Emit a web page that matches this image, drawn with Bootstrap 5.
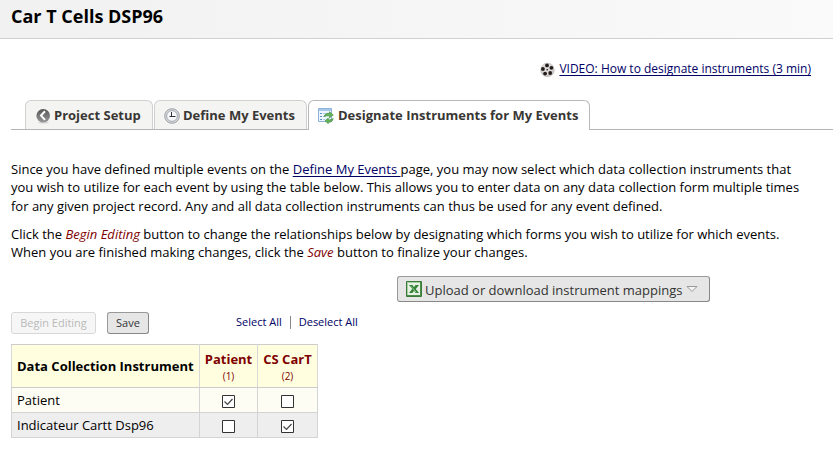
<!DOCTYPE html>
<html lang="en">
<head>
<meta charset="utf-8">
<title>Car T Cells DSP96</title>
<link href="https://cdn.jsdelivr.net/npm/bootstrap@5.3.0/dist/css/bootstrap.min.css" rel="stylesheet">
<style>
body{font-family:"Open Sans",sans-serif;font-size:13px;line-height:18.57px;color:#000;background:#fff;overflow:hidden}
a{color:#000066}
svg{flex:none;display:block}
.page-head{height:39px;padding:4px 11px 0;background:linear-gradient(90deg,#f1f1f1,#fafafa);border-bottom:1px solid #d0d0d0}
.page-head h1{font-size:18px;font-weight:700;line-height:25px}
.video-row{height:61px;padding:21px 22px 0 0}
.video-row a{font-size:12px;line-height:18px;text-decoration:none}
.video-row svg{margin:2px 4px 0 0}
.video-row a span,.ul{text-decoration:underline;text-decoration-thickness:1px;text-underline-offset:2px;text-decoration-skip-ink:none}
.page-main{padding-left:11px}
.nav-tabs.steps{height:30px;padding-left:14px;gap:1px;border-bottom:1px solid #b5b5b5}
.steps .nav-link{height:29px;margin:0;padding:0 10px;border:1px solid #d0d0d0;border-bottom:0;border-radius:6px 6px 0 0;background:#f4f4f3;color:#393733;font-size:13px;font-weight:700;white-space:nowrap}
.steps .nav-link svg{margin:1px 3px 0 0}
.steps .nav-link.t2 svg{margin-left:-1px}
.steps .nav-link.t3 svg{margin-right:4px}
.steps .nav-link.active{height:30px;padding:0 9px 1px;background:#fff;border-color:#b8b8b8;color:#393733}
.t1{width:128px}.t2{width:153px}.t3{width:282px}
.intro{padding-top:30px}
.intro p{margin-bottom:9.8px;line-height:18.4px;white-space:nowrap}
.intro em,.ev{color:#800000}
.tool{border:1px solid #999;border-right-color:#888;border-bottom-color:#888;border-radius:3px;background:#e6e6e6;color:#333;padding:0;line-height:1}
.tool:disabled{background:#f6f6f6;border-color:#d8d8d8;color:#b9b9b9;opacity:1}
.map-btn{width:313px;height:26px;margin:14.2px 0 10px 386px;font-size:13px;padding-left:8px}
.map-btn span{padding-top:3px;margin-left:3px}
.small-btn{height:22px;font-size:11px;padding-bottom:2px}
.w-edit{width:85px}.w-save{width:42px;margin-left:11px}
.picks{font-size:11px;margin-left:87px;line-height:20px;padding-bottom:2px}
.picks a{text-decoration:none}
.sep{width:1px;height:13px;background:#888;margin:0 8px}
.grid-table{width:307px;table-layout:fixed;border-collapse:collapse;margin:10px 0 0;border:1px solid #c8c8c8}
.grid-table th,.grid-table td{border:1px solid #d4d4d4;padding:0 5px;height:25px;line-height:18px;vertical-align:middle;white-space:nowrap}
.grid-table th{height:43px;background:#ffffe0;border-color:#ccc #d8d8d8;padding-bottom:1px}
.grid-table th.ev{padding:2px 0 0;line-height:17px}
.grid-table .ev small{display:block;font-size:10px;font-weight:400;line-height:16px}
.grid-table tbody tr:first-child{background:#fdfdf4}
.grid-table tbody tr:last-child{background:#eee}
.grid-table td svg{margin:3px auto 0}
</style>
<script src="https://cdn.jsdelivr.net/npm/bootstrap@5.3.0/dist/js/bootstrap.bundle.min.js"></script>
</head>
<body>
<header class="page-head"><h1 class="m-0">Car T Cells DSP96</h1></header>
<div class="video-row d-flex justify-content-end">
<a href="#" class="d-flex align-items-center align-self-start">
<svg width="15" height="16" viewBox="0 0 15 16"><circle cx="7.5" cy="8" r="7.2" fill="#c9c6c4"/><circle cx="7" cy="7" r="5.6" fill="#dddbd9"/><g fill="#231c1b"><circle cx="7" cy="3.4" r="1.9"/><circle cx="11.4" cy="5.8" r="1.9"/><circle cx="10.2" cy="11" r="1.9"/><circle cx="5.1" cy="11.6" r="1.9"/><circle cx="2.9" cy="7" r="1.9"/><circle cx="7.2" cy="7.8" r=".8"/></g></svg>
<span>VIDEO: How to designate instruments (3 min)</span></a>
</div>
<main class="page-main">
<nav class="nav nav-tabs steps flex-nowrap">
<a href="#" class="nav-link t1 d-flex align-items-center"><svg width="15" height="16" viewBox="0 0 15 16"><defs><linearGradient id="gb" x2="0" y2="1"><stop stop-color="#555"/><stop offset="1" stop-color="#999"/></linearGradient></defs><ellipse cx="7.5" cy="14.5" rx="5" ry="1" fill="#d4d4d4"/><circle cx="7.2" cy="7.7" r="6.8" fill="url(#gb)"/><path d="M9 3.3 5 7.6 9 11.9" fill="none" stroke="#fff" stroke-width="2"/></svg>Project Setup</a>
<a href="#" class="nav-link t2 d-flex align-items-center"><svg width="16" height="16" viewBox="0 0 16 16"><circle cx="8" cy="8" r="7.3" fill="#dcdfe1" stroke="#9b9ea3"/><circle cx="8" cy="8" r="5.4" fill="#f5f8fa" stroke="#a2a6ac"/><path d="M7.5 4v4.5h4M5.5 8.5H8" fill="none" stroke="#333"/></svg>Define My Events</a>
<a href="#" class="nav-link active t3 d-flex align-items-center"><svg width="16" height="16" viewBox="0 0 16 16"><path d="M.5.5h13v13H.5z" fill="#eef5fd" stroke="#8db1d8"/><path d="M1 1h12v2H1z" fill="#a8c8eb"/><path d="M2 5h2v1H2zm0 3h2v1H2zm0 3h2v1H2z" fill="#5d91c9"/><path d="M5 5h7v1H5zm0 3h3v1H5zm0 3h2v1H5z" fill="#b3cce7"/><path d="M6 8.5C7 5.8 9 5 11.5 5.4V3.7L15.3 7l-3.8 2.8V8C9.5 7.5 8 8 6 8.5z" fill="#65b35b" stroke="#3c8c3b" stroke-width=".6"/><path d="M15.3 10.5c-.7 3-2.6 4-5 3.7v1.5L7 12.7l3.3-2.6v1.6c1.8.3 3.4-.1 5-1.2z" fill="#65b35b" stroke="#3c8c3b" stroke-width=".6"/></svg>Designate Instruments for My Events</a>
</nav>
<section class="intro">
<p>Since you have defined multiple events on the <a href="#" class="ul">Define My Events </a>page, you may now select which data collection instruments that<br>you wish to utilize for each event by using the table below. This allows you to enter data on any data collection form multiple times<br>for any given project record. Any and all data collection instruments can thus be used for any event defined.</p>
<p>Click the <em>Begin Editing</em> button to change the relationships below by designating which forms you wish to utilize for which events.<br>When you are finished making changes, click the <em>Save</em> button to finalize your changes.</p>
</section>
<button class="tool map-btn d-flex align-items-center" type="button"><svg width="16" height="16" viewBox="0 0 16 16"><path d="M.5.5h15v15H.5z" fill="#a9cfa2" stroke="#397a3a"/><path d="M14 1h1v14H1v-1h13z" fill="#4c8f4b"/><path d="M2 2h12v12H2z" fill="#e6f1e3"/><path d="M3 4h3.5L8 6.2 9.5 4H13l-3.2 4 3.2 4H9.6L8 9.7 6.4 12H3l3.2-4z" fill="#338237"/><path d="m4.5 4.8 5.7 6.5" stroke="#91c68b"/></svg><span>Upload or download instrument mappings</span><svg class="ms-1" width="12" height="8" viewBox="0 0 12 8"><path d="M1 1.5h10L6 6.5z" fill="#f3f3f3" stroke="#999"/></svg></button>
<div class="d-flex align-items-center">
<button class="tool small-btn w-edit" type="button" disabled>Begin Editing</button>
<button class="tool small-btn w-save" type="button">Save</button>
<div class="picks d-flex align-items-center"><a href="#">Select All</a><span class="sep"></span><a href="#">Deselect All</a></div>
</div>
<table class="grid-table">
<colgroup><col style="width:188px"><col style="width:58px"><col style="width:60px"></colgroup>
<thead><tr><th>Data Collection Instrument</th><th class="ev text-center">Patient<small>(1)</small></th><th class="ev text-center">CS CarT<small>(2)</small></th></tr></thead>
<tbody>
<tr><td>Patient</td><td><svg width="13" height="13"><path d="M.5.5h12v12H.5z" fill="#fff" stroke="#333"/><path d="m2.5 6.5 3 3 5-5.5" fill="none" stroke="#444" stroke-width="1.2"/></svg></td><td><svg width="13" height="13"><path d="M.5.5h12v12H.5z" fill="#fff" stroke="#333"/></svg></td></tr>
<tr><td>Indicateur Cartt Dsp96</td><td><svg width="13" height="13"><path d="M.5.5h12v12H.5z" fill="#fff" stroke="#333"/></svg></td><td><svg width="13" height="13"><path d="M.5.5h12v12H.5z" fill="#fff" stroke="#333"/><path d="m2.5 6.5 3 3 5-5.5" fill="none" stroke="#444" stroke-width="1.2"/></svg></td></tr>
</tbody>
</table>
</main>
</body>
</html>
